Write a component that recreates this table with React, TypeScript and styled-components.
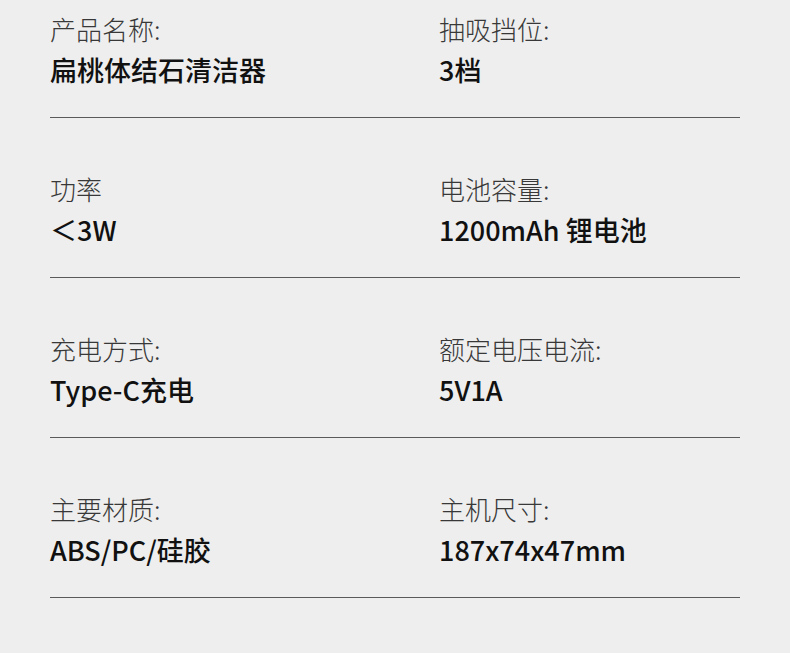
import styled, { createGlobalStyle } from 'styled-components';

const GlobalStyle = createGlobalStyle`
  html, body {
    margin: 0;
    padding: 0;
    background: #eeeeee;
  }
  body {
    font-family: 'Noto Sans CJK SC', 'Noto Sans', sans-serif;
  }
`;

const Page = styled.div`
  width: 790px;
  height: 653px;
  box-sizing: border-box;
  padding: 11px 50px 0 50px;
  background: #eeeeee;
  overflow: hidden;
`;

const Section = styled.section`
  & + & {
    margin-top: 53px;
  }
`;

const Grid = styled.div`
  display: grid;
  grid-template-columns: 389px 1fr;
`;

const Item = styled.div`
  display: flex;
  flex-direction: column;
  gap: 4px;
`;

const Label = styled.div`
  font-size: 26px;
  line-height: 36px;
  font-weight: 300;
  color: #383838;
`;

const Value = styled.div`
  font-size: 27px;
  line-height: 38px;
  font-weight: 500;
  color: #111111;
`;

const Divider = styled.hr`
  margin: 28px 0 0 0;
  border: none;
  height: 1px;
  background: #5a5a5a;
`;

type Spec = { label: string; value: string };

const rows: Spec[][] = [
  [
    { label: '产品名称:', value: '扁桃体结石清洁器' },
    { label: '抽吸挡位:', value: '3档' },
  ],
  [
    { label: '功率', value: '＜3W' },
    { label: '电池容量:', value: '1200mAh 锂电池' },
  ],
  [
    { label: '充电方式:', value: 'Type-C充电' },
    { label: '额定电压电流:', value: '5V1A' },
  ],
  [
    { label: '主要材质:', value: 'ABS/PC/硅胶' },
    { label: '主机尺寸:', value: '187x74x47mm' },
  ],
];

function App() {
  return (
    <>
      <GlobalStyle />
      <Page>
        {rows.map((row, i) => (
          <Section key={i}>
            <Grid>
              {row.map((s) => (
                <Item key={s.label}>
                  <Label>{s.label}</Label>
                  <Value>{s.value}</Value>
                </Item>
              ))}
            </Grid>
            <Divider />
          </Section>
        ))}
      </Page>
    </>
  );
}

export default App;
